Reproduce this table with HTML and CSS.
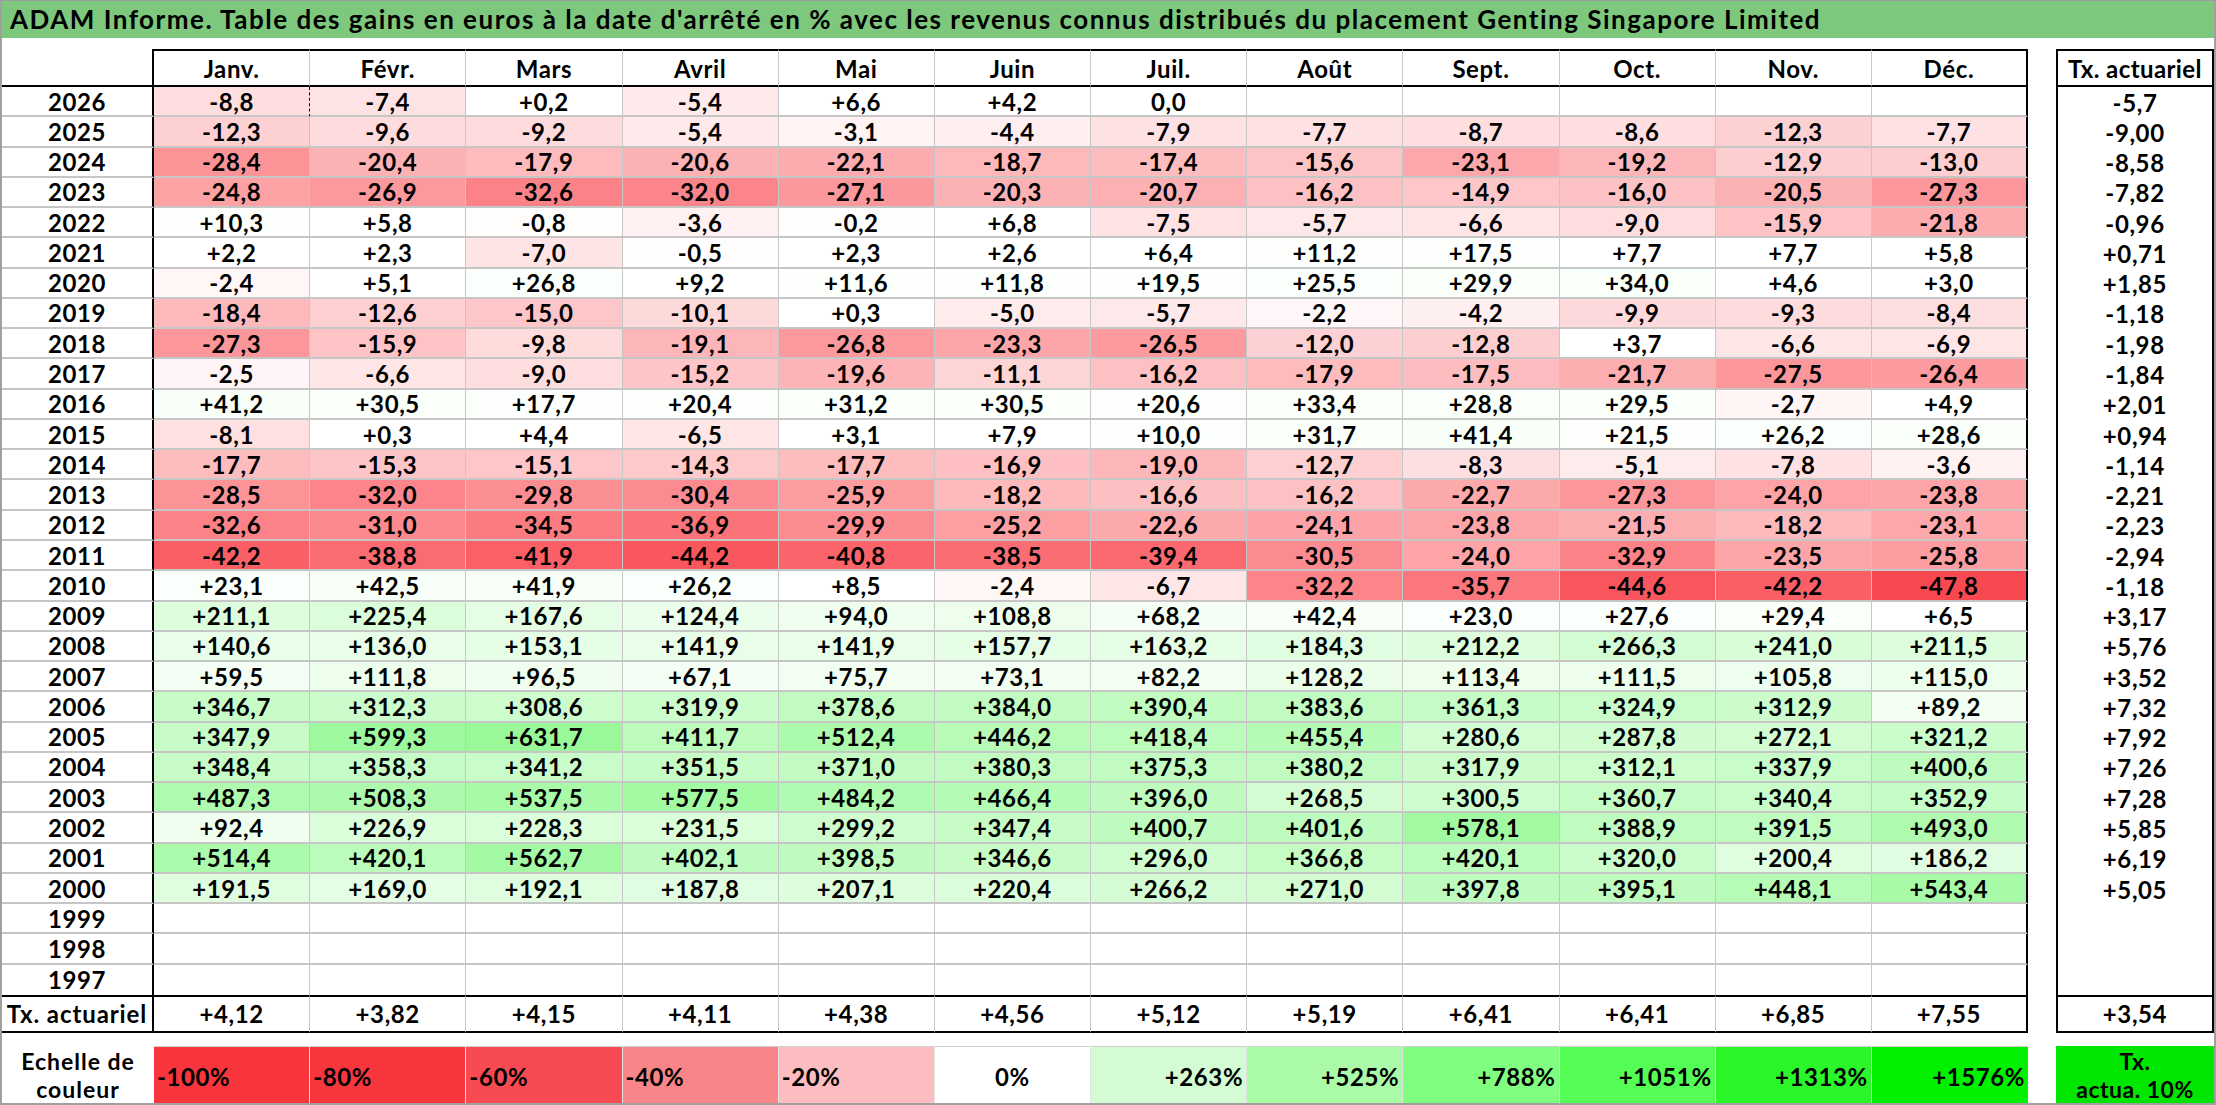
FILE: index.html
```html
<!DOCTYPE html>
<html lang="fr">
<head>
<meta charset="utf-8">
<title>ADAM Informe - Genting Singapore Limited</title>
<link rel="stylesheet" href="styles.css">
</head>
<body>
<div class="sheet">
  <div class="title">ADAM Informe. Table des gains en euros à la date d'arrêté en % avec les revenus connus distribués du placement Genting Singapore Limited</div>
  <div class="grid">
    <div class="row hdr"><div class="lab"></div><div class="h">Janv.</div><div class="h">Févr.</div><div class="h">Mars</div><div class="h">Avril</div><div class="h">Mai</div><div class="h">Juin</div><div class="h">Juil.</div><div class="h">Août</div><div class="h">Sept.</div><div class="h">Oct.</div><div class="h">Nov.</div><div class="h last">Déc.</div><div class="tx txh">Tx. actuariel</div></div>
    <div class="row d"><div class="lab">2026</div><div class="c dash">-8,8</div><div class="c">-7,4</div><div class="c">+0,2</div><div class="c">-5,4</div><div class="c">+6,6</div><div class="c">+4,2</div><div class="c">0,0</div><div class="c"></div><div class="c"></div><div class="c"></div><div class="c"></div><div class="c last"></div><div class="tx">-5,7</div></div>
    <div class="row d"><div class="lab">2025</div><div class="c">-12,3</div><div class="c">-9,6</div><div class="c">-9,2</div><div class="c">-5,4</div><div class="c">-3,1</div><div class="c">-4,4</div><div class="c">-7,9</div><div class="c">-7,7</div><div class="c">-8,7</div><div class="c">-8,6</div><div class="c">-12,3</div><div class="c last">-7,7</div><div class="tx">-9,00</div></div>
    <div class="row d"><div class="lab">2024</div><div class="c">-28,4</div><div class="c">-20,4</div><div class="c">-17,9</div><div class="c">-20,6</div><div class="c">-22,1</div><div class="c">-18,7</div><div class="c">-17,4</div><div class="c">-15,6</div><div class="c">-23,1</div><div class="c">-19,2</div><div class="c">-12,9</div><div class="c last">-13,0</div><div class="tx">-8,58</div></div>
    <div class="row d"><div class="lab">2023</div><div class="c">-24,8</div><div class="c">-26,9</div><div class="c">-32,6</div><div class="c">-32,0</div><div class="c">-27,1</div><div class="c">-20,3</div><div class="c">-20,7</div><div class="c">-16,2</div><div class="c">-14,9</div><div class="c">-16,0</div><div class="c">-20,5</div><div class="c last">-27,3</div><div class="tx">-7,82</div></div>
    <div class="row d"><div class="lab">2022</div><div class="c">+10,3</div><div class="c">+5,8</div><div class="c">-0,8</div><div class="c">-3,6</div><div class="c">-0,2</div><div class="c">+6,8</div><div class="c">-7,5</div><div class="c">-5,7</div><div class="c">-6,6</div><div class="c">-9,0</div><div class="c">-15,9</div><div class="c last">-21,8</div><div class="tx">-0,96</div></div>
    <div class="row d"><div class="lab">2021</div><div class="c">+2,2</div><div class="c">+2,3</div><div class="c">-7,0</div><div class="c">-0,5</div><div class="c">+2,3</div><div class="c">+2,6</div><div class="c">+6,4</div><div class="c">+11,2</div><div class="c">+17,5</div><div class="c">+7,7</div><div class="c">+7,7</div><div class="c last">+5,8</div><div class="tx">+0,71</div></div>
    <div class="row d"><div class="lab">2020</div><div class="c">-2,4</div><div class="c">+5,1</div><div class="c">+26,8</div><div class="c">+9,2</div><div class="c">+11,6</div><div class="c">+11,8</div><div class="c">+19,5</div><div class="c">+25,5</div><div class="c">+29,9</div><div class="c">+34,0</div><div class="c">+4,6</div><div class="c last">+3,0</div><div class="tx">+1,85</div></div>
    <div class="row d"><div class="lab">2019</div><div class="c">-18,4</div><div class="c">-12,6</div><div class="c">-15,0</div><div class="c">-10,1</div><div class="c">+0,3</div><div class="c">-5,0</div><div class="c">-5,7</div><div class="c">-2,2</div><div class="c">-4,2</div><div class="c">-9,9</div><div class="c">-9,3</div><div class="c last">-8,4</div><div class="tx">-1,18</div></div>
    <div class="row d"><div class="lab">2018</div><div class="c">-27,3</div><div class="c">-15,9</div><div class="c">-9,8</div><div class="c">-19,1</div><div class="c">-26,8</div><div class="c">-23,3</div><div class="c">-26,5</div><div class="c">-12,0</div><div class="c">-12,8</div><div class="c">+3,7</div><div class="c">-6,6</div><div class="c last">-6,9</div><div class="tx">-1,98</div></div>
    <div class="row d"><div class="lab">2017</div><div class="c">-2,5</div><div class="c">-6,6</div><div class="c">-9,0</div><div class="c">-15,2</div><div class="c">-19,6</div><div class="c">-11,1</div><div class="c">-16,2</div><div class="c">-17,9</div><div class="c">-17,5</div><div class="c">-21,7</div><div class="c">-27,5</div><div class="c last">-26,4</div><div class="tx">-1,84</div></div>
    <div class="row d"><div class="lab">2016</div><div class="c">+41,2</div><div class="c">+30,5</div><div class="c">+17,7</div><div class="c">+20,4</div><div class="c">+31,2</div><div class="c">+30,5</div><div class="c">+20,6</div><div class="c">+33,4</div><div class="c">+28,8</div><div class="c">+29,5</div><div class="c">-2,7</div><div class="c last">+4,9</div><div class="tx">+2,01</div></div>
    <div class="row d"><div class="lab">2015</div><div class="c">-8,1</div><div class="c">+0,3</div><div class="c">+4,4</div><div class="c">-6,5</div><div class="c">+3,1</div><div class="c">+7,9</div><div class="c">+10,0</div><div class="c">+31,7</div><div class="c">+41,4</div><div class="c">+21,5</div><div class="c">+26,2</div><div class="c last">+28,6</div><div class="tx">+0,94</div></div>
    <div class="row d"><div class="lab">2014</div><div class="c">-17,7</div><div class="c">-15,3</div><div class="c">-15,1</div><div class="c">-14,3</div><div class="c">-17,7</div><div class="c">-16,9</div><div class="c">-19,0</div><div class="c">-12,7</div><div class="c">-8,3</div><div class="c">-5,1</div><div class="c">-7,8</div><div class="c last">-3,6</div><div class="tx">-1,14</div></div>
    <div class="row d"><div class="lab">2013</div><div class="c">-28,5</div><div class="c">-32,0</div><div class="c">-29,8</div><div class="c">-30,4</div><div class="c">-25,9</div><div class="c">-18,2</div><div class="c">-16,6</div><div class="c">-16,2</div><div class="c">-22,7</div><div class="c">-27,3</div><div class="c">-24,0</div><div class="c last">-23,8</div><div class="tx">-2,21</div></div>
    <div class="row d"><div class="lab">2012</div><div class="c">-32,6</div><div class="c">-31,0</div><div class="c">-34,5</div><div class="c">-36,9</div><div class="c">-29,9</div><div class="c">-25,2</div><div class="c">-22,6</div><div class="c">-24,1</div><div class="c">-23,8</div><div class="c">-21,5</div><div class="c">-18,2</div><div class="c last">-23,1</div><div class="tx">-2,23</div></div>
    <div class="row d"><div class="lab">2011</div><div class="c">-42,2</div><div class="c">-38,8</div><div class="c">-41,9</div><div class="c">-44,2</div><div class="c">-40,8</div><div class="c">-38,5</div><div class="c">-39,4</div><div class="c">-30,5</div><div class="c">-24,0</div><div class="c">-32,9</div><div class="c">-23,5</div><div class="c last">-25,8</div><div class="tx">-2,94</div></div>
    <div class="row d"><div class="lab">2010</div><div class="c">+23,1</div><div class="c">+42,5</div><div class="c">+41,9</div><div class="c">+26,2</div><div class="c">+8,5</div><div class="c">-2,4</div><div class="c">-6,7</div><div class="c">-32,2</div><div class="c">-35,7</div><div class="c">-44,6</div><div class="c">-42,2</div><div class="c last">-47,8</div><div class="tx">-1,18</div></div>
    <div class="row d"><div class="lab">2009</div><div class="c">+211,1</div><div class="c">+225,4</div><div class="c">+167,6</div><div class="c">+124,4</div><div class="c">+94,0</div><div class="c">+108,8</div><div class="c">+68,2</div><div class="c">+42,4</div><div class="c">+23,0</div><div class="c">+27,6</div><div class="c">+29,4</div><div class="c last">+6,5</div><div class="tx">+3,17</div></div>
    <div class="row d"><div class="lab">2008</div><div class="c">+140,6</div><div class="c">+136,0</div><div class="c">+153,1</div><div class="c">+141,9</div><div class="c">+141,9</div><div class="c">+157,7</div><div class="c">+163,2</div><div class="c">+184,3</div><div class="c">+212,2</div><div class="c">+266,3</div><div class="c">+241,0</div><div class="c last">+211,5</div><div class="tx">+5,76</div></div>
    <div class="row d"><div class="lab">2007</div><div class="c">+59,5</div><div class="c">+111,8</div><div class="c">+96,5</div><div class="c">+67,1</div><div class="c">+75,7</div><div class="c">+73,1</div><div class="c">+82,2</div><div class="c">+128,2</div><div class="c">+113,4</div><div class="c">+111,5</div><div class="c">+105,8</div><div class="c last">+115,0</div><div class="tx">+3,52</div></div>
    <div class="row d"><div class="lab">2006</div><div class="c">+346,7</div><div class="c">+312,3</div><div class="c">+308,6</div><div class="c">+319,9</div><div class="c">+378,6</div><div class="c">+384,0</div><div class="c">+390,4</div><div class="c">+383,6</div><div class="c">+361,3</div><div class="c">+324,9</div><div class="c">+312,9</div><div class="c last">+89,2</div><div class="tx">+7,32</div></div>
    <div class="row d"><div class="lab">2005</div><div class="c">+347,9</div><div class="c">+599,3</div><div class="c">+631,7</div><div class="c">+411,7</div><div class="c">+512,4</div><div class="c">+446,2</div><div class="c">+418,4</div><div class="c">+455,4</div><div class="c">+280,6</div><div class="c">+287,8</div><div class="c">+272,1</div><div class="c last">+321,2</div><div class="tx">+7,92</div></div>
    <div class="row d"><div class="lab">2004</div><div class="c">+348,4</div><div class="c">+358,3</div><div class="c">+341,2</div><div class="c">+351,5</div><div class="c">+371,0</div><div class="c">+380,3</div><div class="c">+375,3</div><div class="c">+380,2</div><div class="c">+317,9</div><div class="c">+312,1</div><div class="c">+337,9</div><div class="c last">+400,6</div><div class="tx">+7,26</div></div>
    <div class="row d"><div class="lab">2003</div><div class="c">+487,3</div><div class="c">+508,3</div><div class="c">+537,5</div><div class="c">+577,5</div><div class="c">+484,2</div><div class="c">+466,4</div><div class="c">+396,0</div><div class="c">+268,5</div><div class="c">+300,5</div><div class="c">+360,7</div><div class="c">+340,4</div><div class="c last">+352,9</div><div class="tx">+7,28</div></div>
    <div class="row d"><div class="lab">2002</div><div class="c">+92,4</div><div class="c">+226,9</div><div class="c">+228,3</div><div class="c">+231,5</div><div class="c">+299,2</div><div class="c">+347,4</div><div class="c">+400,7</div><div class="c">+401,6</div><div class="c">+578,1</div><div class="c">+388,9</div><div class="c">+391,5</div><div class="c last">+493,0</div><div class="tx">+5,85</div></div>
    <div class="row d"><div class="lab">2001</div><div class="c">+514,4</div><div class="c">+420,1</div><div class="c">+562,7</div><div class="c">+402,1</div><div class="c">+398,5</div><div class="c">+346,6</div><div class="c">+296,0</div><div class="c">+366,8</div><div class="c">+420,1</div><div class="c">+320,0</div><div class="c">+200,4</div><div class="c last">+186,2</div><div class="tx">+6,19</div></div>
    <div class="row d"><div class="lab">2000</div><div class="c">+191,5</div><div class="c">+169,0</div><div class="c">+192,1</div><div class="c">+187,8</div><div class="c">+207,1</div><div class="c">+220,4</div><div class="c">+266,2</div><div class="c">+271,0</div><div class="c">+397,8</div><div class="c">+395,1</div><div class="c">+448,1</div><div class="c last">+543,4</div><div class="tx">+5,05</div></div>
    <div class="row d"><div class="lab">1999</div><div class="c"></div><div class="c"></div><div class="c"></div><div class="c"></div><div class="c"></div><div class="c"></div><div class="c"></div><div class="c"></div><div class="c"></div><div class="c"></div><div class="c"></div><div class="c last"></div><div class="tx"></div></div>
    <div class="row d"><div class="lab">1998</div><div class="c"></div><div class="c"></div><div class="c"></div><div class="c"></div><div class="c"></div><div class="c"></div><div class="c"></div><div class="c"></div><div class="c"></div><div class="c"></div><div class="c"></div><div class="c last"></div><div class="tx"></div></div>
    <div class="row d final"><div class="lab">1997</div><div class="c"></div><div class="c"></div><div class="c"></div><div class="c"></div><div class="c"></div><div class="c"></div><div class="c"></div><div class="c"></div><div class="c"></div><div class="c"></div><div class="c"></div><div class="c last"></div><div class="tx"></div></div>
    <div class="row tot"><div class="lab">Tx. actuariel</div><div class="c">+4,12</div><div class="c">+3,82</div><div class="c">+4,15</div><div class="c">+4,11</div><div class="c">+4,38</div><div class="c">+4,56</div><div class="c">+5,12</div><div class="c">+5,19</div><div class="c">+6,41</div><div class="c">+6,41</div><div class="c">+6,85</div><div class="c last">+7,55</div><div class="tx">+3,54</div></div>
  </div>
  <div class="scale">
    <div class="slab">Echelle de<br>couleur</div>
    <div class="sw l s1">-100%</div>
    <div class="sw l s2">-80%</div>
    <div class="sw l s3">-60%</div>
    <div class="sw l s4">-40%</div>
    <div class="sw l s5">-20%</div>
    <div class="sw m s6">0%</div>
    <div class="sw r s7">+263%</div>
    <div class="sw r s8">+525%</div>
    <div class="sw r s9">+788%</div>
    <div class="sw r s10">+1051%</div>
    <div class="sw r s11">+1313%</div>
    <div class="sw r s12">+1576%</div>
    <div class="stx">Tx.<br>actua. 10%</div>
  </div>
</div>
<script src="script.js"></script>
</body>
</html>
```

FILE: styles.css
```css
* { box-sizing: border-box; }
html, body { margin: 0; padding: 0; background: #fff; }
body {
  font-family: Lato, "Open Sans", sans-serif;
  font-weight: 700;
  color: #000;
}
.sheet {
  --cols: 152px repeat(12, minmax(0, 1fr)) 28px 158px;
  width: 2216px;
  height: 1105px;
  border-left: 2px solid #a0a0a0;
  border-right: 2px solid #a0a0a0;
  border-bottom: 2px solid #a0a0a0;
  border-top: 1px solid #9a9a9a;
  overflow: hidden;
}
.title {
  height: 37px;
  background: #7dc87d;
  font-size: 26px;
  letter-spacing: 1.5px;
  line-height: 37px;
  padding-left: 8px;
  white-space: nowrap;
}
.grid {
  margin-top: 11px;
  height: 984px;
  display: flex;
  flex-direction: column;
}
.row {
  display: grid;
  grid-template-columns: var(--cols);
  flex: 1 1 0;
  min-height: 0;
  font-size: 24px;
  line-height: 1;
  letter-spacing: 0.6px;
}
.row.hdr, .row.tot { flex: 0 0 38px; }
.row > div {
  display: flex;
  align-items: center;
  justify-content: center;
  white-space: nowrap;
  padding-top: 1px;
}
.lab {
  border-right: 2px solid #000;
  border-bottom: 2px solid #c6c6c6;
}
.hdr .lab { border-bottom: 2px solid #000; }
.h {
  border-top: 2px solid #000;
  border-bottom: 2px solid #000;
  border-right: 1px solid #c6c6c6;
}
.c {
  border-right: 1px solid #c6c6c6;
  border-bottom: 2px solid #c6c6c6;
  background: #fff;
}
.c.dash { border-right: 1px dashed #000; }
.h.last, .c.last { border-right: 2px solid #000; }
.final .c, .final .lab { border-bottom: none; }
.tot .c, .tot .lab {
  border-top: 2px solid #000;
  border-bottom: 2px solid #000;
}
.tot .lab { letter-spacing: 0.9px; }
.tx {
  grid-column: 15;
  border-left: 2px solid #000;
  border-right: 2px solid #000;
}
.tx.txh {
  border-top: 2px solid #000;
  border-bottom: 2px solid #000;
  letter-spacing: 0.4px;
}
.tot .tx {
  border-top: 2px solid #000;
  border-bottom: 2px solid #000;
}
.scale {
  margin-top: 13px;
  height: 57px;
  display: grid;
  grid-template-columns: var(--cols);
  font-size: 24px;
  letter-spacing: 0.6px;
}
.slab {
  display: flex;
  align-items: center;
  justify-content: center;
  text-align: center;
  font-size: 23px;
  line-height: 28px;
  letter-spacing: 1px;
}
.sw {
  display: flex;
  align-items: center;
  padding: 4px 3px 0;
  line-height: 1;
  border-top: 1px solid #d0d0d0;
  border-right: 1px solid #e2e2e2;
}
.sw.l { justify-content: flex-start; }
.sw.m { justify-content: center; }
.sw.r { justify-content: flex-end; }
.s1 { background: #f8343c; }
.s2 { background: #f8363e; }
.s3 { background: #f84a52; }
.s4 { background: #fa8589; }
.s5 { background: #fbbdbf; }
.s6 { background: #ffffff; }
.s7 { background: #d4fcd4; }
.s8 { background: #aafaa8; }
.s9 { background: #80fe80; }
.s10 { background: #55fe55; }
.s11 { background: #2af62a; }
.s12 { background: #00f000; border-right: none; }
.stx {
  grid-column: 15;
  background: #00e600;
  display: flex;
  align-items: center;
  justify-content: center;
  text-align: center;
  font-size: 23px;
  line-height: 28px;
  letter-spacing: 0.5px;
}
```

FILE: script.js
```js
document.querySelectorAll('.row.d .c').forEach(function (el) {
  var v = parseFloat(el.textContent.replace(',', '.'));
  if (isNaN(v)) return;
  var r, g, b, t;
  if (v < 0) {
    t = Math.min(1, -v / 53.4);
    r = 255 - 7 * t; g = 255 - 203 * t; b = 255 - 195 * t;
  } else {
    t = Math.min(1, v / 1576);
    r = 255 - 255 * t; g = 255 - 15 * t; b = 255 - 255 * t;
  }
  el.style.backgroundColor = 'rgb(' + Math.round(r) + ',' + Math.round(g) + ',' + Math.round(b) + ')';
});
```
